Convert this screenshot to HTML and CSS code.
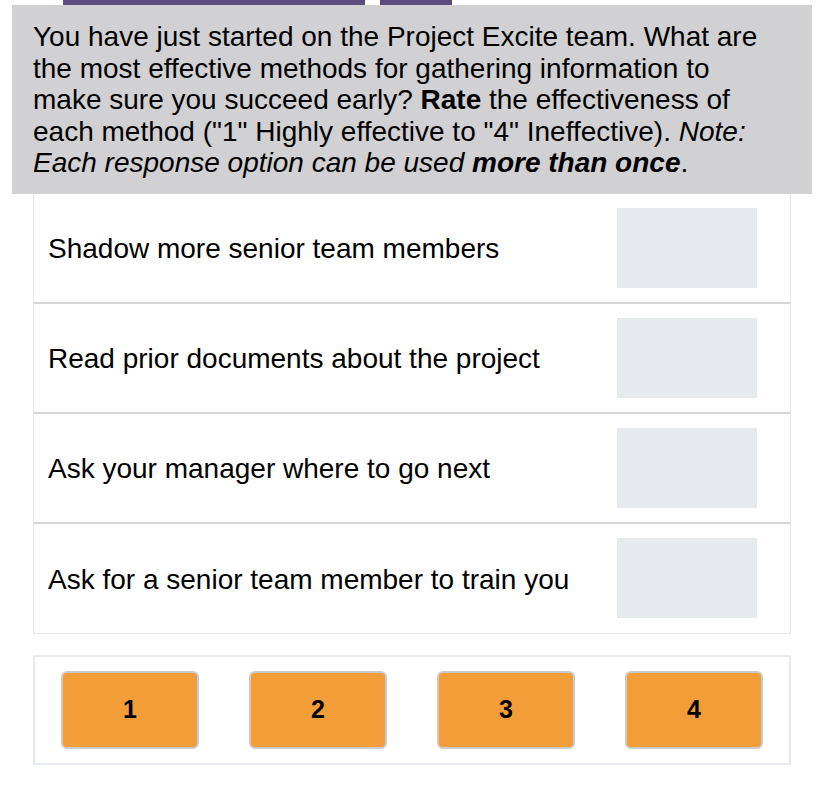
FILE: index.html
```html
<!DOCTYPE html>
<html lang="en">
<head>
    <meta charset="UTF-8">
    <title>Rate</title>
    <link rel="stylesheet" href="styles.css">
</head>
<body>
    <div class="tabs">
        <span class="tab tab_wide"></span>
        <span class="tab tab_small"></span>
    </div>
    <div class="question">
        You have just started on the Project Excite team. What are<br>
        the most effective methods for gathering information to<br>
        make sure you succeed early? <b>Rate</b> the effectiveness of<br>
        each method ("1" Highly effective to "4" Ineffective). <i>Note:<br>
        Each response option can be used <b>more than once</b></i>.
    </div>
    <ul class="items">
        <li><span>Shadow more senior team members</span><div class="drop"></div></li>
        <li><span>Read prior documents about the project</span><div class="drop"></div></li>
        <li><span>Ask your manager where to go next</span><div class="drop"></div></li>
        <li><span>Ask for a senior team member to train you</span><div class="drop"></div></li>
    </ul>
    <div class="choices">
        <button>1</button>
        <button>2</button>
        <button>3</button>
        <button>4</button>
    </div>
</body>
</html>
```

FILE: styles.css
```css
* {
    margin: 0;
    padding: 0;
    list-style: none;
    box-sizing: border-box;
}
body {
    background-color: #fff;
    font-family: "Liberation Sans", Arial, sans-serif;
    color: #000;
    width: 840px;
}
.tabs {
    display: flex;
    height: 5px;
    padding-left: 63px;
    gap: 15px;
}
.tab {
    display: block;
    height: 5px;
    background-color: #5d4c7f;
}
.tab_wide {
    width: 302px;
}
.tab_small {
    width: 72px;
}
.question {
    width: 800px;
    margin-left: 12px;
    background-color: #d1d0d2;
    padding: 16px 0 15px 21px;
    font-size: 28px;
    line-height: 31.5px;
    white-space: nowrap;
}
.items {
    width: 758px;
    margin-left: 33px;
    border: 1px solid #e4e8ed;
    border-top: 0;
}
.items li {
    height: 110px;
    display: flex;
    align-items: center;
    justify-content: space-between;
    padding: 0 33px 0 14px;
    font-size: 28px;
    border-bottom: 2px solid #d6d6d6;
}
.items li span {
    padding-top: 3px;
}
.items li:last-child {
    height: 109px;
    border-bottom: 0;
}
.drop {
    width: 140px;
    height: 80px;
    background-color: #e6e9ee;
}
.choices {
    width: 758px;
    height: 110px;
    margin: 21px 0 0 33px;
    border: 2px solid #e6e9ee;
    display: flex;
    align-items: center;
    justify-content: space-between;
    padding: 0 26px;
}
.choices button {
    width: 138px;
    height: 78px;
    background-color: #f39d38;
    border: 2px solid #cbcbcb;
    border-radius: 6px;
    font-family: "Liberation Sans", Arial, sans-serif;
    font-size: 25px;
    font-weight: bold;
    color: #000;
}
```
